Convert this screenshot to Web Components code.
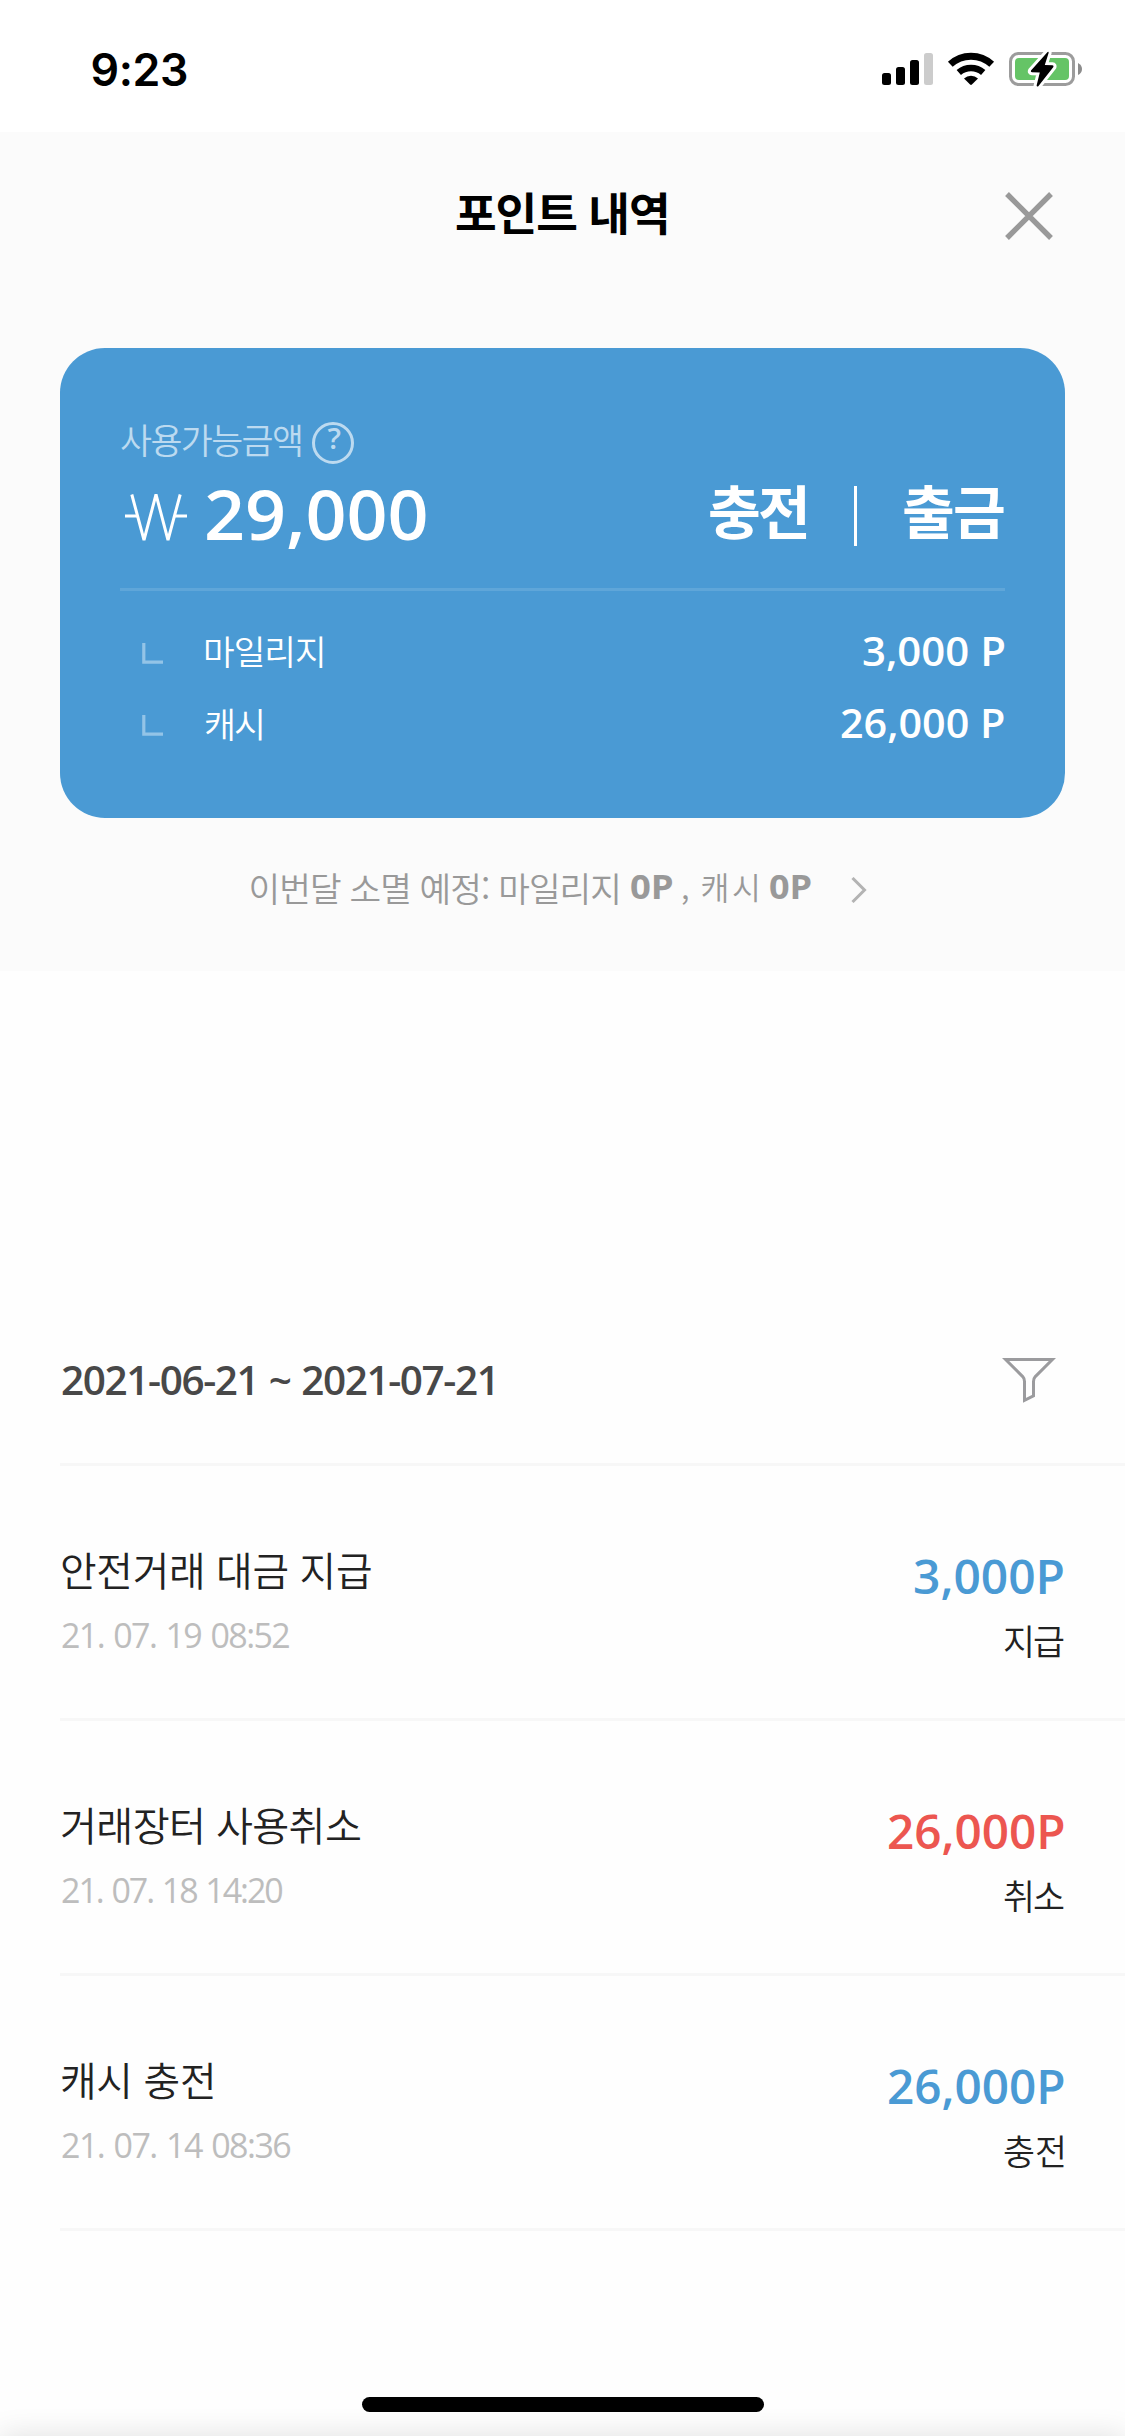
<!DOCTYPE html>
<html lang="ko">
<head>
<meta charset="utf-8">
<title>포인트 내역</title>
<style>
  html, body { margin: 0; background: #fefefe; }
  body { font-family: "Noto Sans CJK KR", sans-serif; }
</style>
</head>
<body>
<point-screen></point-screen>

<script>
const define = (name, html) => customElements.define(name, class extends HTMLElement {
  constructor() {
    super();
    this.attachShadow({ mode: 'open' }).innerHTML = html;
  }
});

/* Text trimmed to its ink box: w and h give the box, size is optional,
   tracking (or a slight widening for figures) makes the text fill the width. */
const ctx = document.createElement('canvas').getContext('2d');
const KR = '"Noto Sans CJK KR", sans-serif';
const FAMILIES = { kr: KR, num: '"Open Sans", "Noto Sans", sans-serif', ui: 'Inter, sans-serif' };
customElements.define('ink-text', class extends HTMLElement {
  constructor() {
    super();
    this.attachShadow({ mode: 'open' }).innerHTML =
      `<style>
        :host { display: flow-root; flex: none; }
        span { display: block; white-space: pre; width: max-content; transform-origin: 0 0; }
      </style><span></span>`;
  }
  connectedCallback() {
    const text = this.getAttribute('text');
    const w = +this.getAttribute('w'), h = +this.getAttribute('h');
    const ws = +this.getAttribute('ws') || 0;
    const weight = this.getAttribute('weight') || 400;
    const face = this.getAttribute('face') || 'kr';
    const family = FAMILIES[face];
    const measure = s => { ctx.font = `${weight} ${s}px ${family}`; return ctx.measureText(text); };
    let size = +this.getAttribute('size');
    if (!size) {
      const m = measure(100);
      size = Math.round(h / (m.actualBoundingBoxAscent + m.actualBoundingBoxDescent) * 1000) / 10;
    }
    const m = measure(size);
    const lh = Math.ceil(size * 1.5);
    const asc = Math.round(m.fontBoundingBoxAscent), desc = Math.round(m.fontBoundingBoxDescent);
    const base = (lh - asc - desc) / 2 + asc;
    this.style.width = w + 'px';
    this.style.height = h + 'px';
    const span = this.shadowRoot.querySelector('span');
    span.textContent = text;
    const n = text.length - 1;
    let ink = m.actualBoundingBoxLeft + m.actualBoundingBoxRight;
    span.style.cssText = `font:${weight} ${size}px/${lh}px ${family};letter-spacing:0.01px;word-spacing:${ws}px`;
    const laid = span.getBoundingClientRect().width;
    if (laid) ink += laid - m.width;
    const scale = face === 'num' && n && w > ink ? Math.min(w / ink, 1.14) : 1;
    const gap = n ? (w / scale - ink) / n : 0;
    span.style.letterSpacing = gap.toFixed(3) + 'px';
    if (scale > 1) span.style.transform = `scaleX(${scale.toFixed(4)})`;
    span.style.margin = `${Math.round(m.actualBoundingBoxAscent - base)}px 0 0 ${(m.actualBoundingBoxLeft * scale).toFixed(2)}px`;
  }
});

define('status-bar', `
<style>
  :host { display: flex; height: 132px; box-sizing: border-box; padding: 51px 43px 0 92.5px; justify-content: space-between; background: #fff; }
  ink-text { margin-top: 1px; }
  svg { display: block; }
</style>
<ink-text text="9:23" face="ui" weight="600" w="94.5" h="34"></ink-text>
<svg width="201" height="37" viewBox="881 51 201 37" aria-hidden="true">
  <rect x="882" y="73" width="9" height="12" rx="2.5"/>
  <rect x="896" y="67" width="9" height="18" rx="2.5"/>
  <rect x="910" y="60" width="9" height="25" rx="2.5"/>
  <rect x="924" y="53" width="9" height="32" rx="2.5" fill="#ccc"/>
  <g fill="none" stroke="#000">
    <path d="M950.3 64.3 A30.5 30.5 0 0 1 991.7 64.3" stroke-width="7"/>
    <path d="M958.8 72.6 A18.6 18.6 0 0 1 983.2 72.6" stroke-width="6.6"/>
  </g>
  <path d="M964 78.4 A10.6 10.6 0 0 1 978 78.4 L971.9 84.5 Q971 85.4 970.1 84.5 Z"/>
  <rect x="1010.5" y="53.5" width="63" height="31" rx="8" fill="none" stroke="#9c9c9c" stroke-width="3"/>
  <rect x="1015" y="58" width="54" height="22" rx="4" fill="#65c466"/>
  <path d="M1078 63 Q1082 65 1082 69 Q1082 73 1078 75 Z" fill="#8c8c8c"/>
  <path d="M1047.6 52 L1031 70.6 Q1030.3 72.2 1032 72.3 L1039.8 72.5 L1036.6 85.6 Q1036.9 87.2 1038.3 86.2 L1053.4 67 Q1054 65.3 1052.4 65.2 L1044.8 64.9 L1048.6 53 Q1048.8 51 1047.6 52 Z" stroke="#fff" stroke-width="6" paint-order="stroke"/>
</svg>`);

define('page-header', `
<style>
  :host { display: grid; grid-template-columns: 1fr auto 1fr; height: 216px; box-sizing: border-box; padding: 60px 72px 0 69px; align-items: start; }
  svg { justify-self: end; }
</style>
<i></i>
<ink-text text="포인트 내역" weight="700" w="210" h="43"></ink-text>
<svg width="48" height="48" viewBox="0 0 48 48" aria-label="닫기"><path d="M2 2 L46 46 M46 2 L2 46" stroke="#999" stroke-width="5.4"/></svg>`);

define('point-row', `
<style>
  :host { display: flex; height: 36px; padding: 0 1px 0 22px; align-items: flex-start; color: #fff; }
  svg { margin: 7px 43px 0 0; flex: none; }
  .amount { display: block; margin: 1px 0 0 auto; }
</style>
<svg width="21" height="21" viewBox="0 0 21 21"><path d="M1.8 0 V19.2 H21" fill="none" stroke="#93c4e7" stroke-width="3.2"/></svg>
<slot></slot><slot class="amount" name="amount"></slot>`);

define('balance-card', `
<style>
  :host { display: flex; flex-direction: column; box-sizing: border-box; margin: 0 60px; height: 470px; padding: 74px 60px 0; border-radius: 45px; background: #4a9ad4; color: #fff; }
  .label { display: flex; height: 63px; padding-left: 1px; gap: 11px; color: #bcdaf0; align-items: flex-start; }
  .label > ink-text { margin-top: 1.5px; }
  .help { display: flex; justify-content: center; box-sizing: border-box; width: 42px; height: 42px; border: 3px solid currentColor; border-radius: 50%; padding: 3px 0 0 1px; }
  .main { display: flex; height: 103px; align-items: flex-start; padding-right: 1px; }
  .won { margin: 8px 20px 0 5px; }
  .sum { margin-top: 5px; }
  .actions { display: flex; margin-left: auto; align-items: flex-start; }
  .bar { width: 3px; height: 60px; margin: 1px 47px 0; background: #fff; }
  hr { width: 100%; height: 3px; margin: 0; border: 0; background: #5fa6d9; }
  .rows { display: flex; flex-direction: column; gap: 36px; padding-top: 45px; }
</style>
<div class="label">
  <ink-text text="사용가능금액" weight="350" w="180" h="32"></ink-text>
  <div class="help"><ink-text text="?" face="num" weight="600" w="12" h="22"></ink-text></div>
</div>
<div class="main">
  <svg class="won" width="62" height="50" viewBox="0 0 62 50" aria-label="₩" fill="none" stroke="#fff" stroke-width="3"><path d="M6.8 1.5 L19 47 L31 1.5 L43 47 L55.2 1.5" stroke-linejoin="bevel"/><path d="M0 23 H12 M50 23 H62"/></svg>
  <ink-text class="sum" text="29,000" face="num" weight="640" size="69" w="219" h="60"></ink-text>
  <div class="actions">
    <ink-text text="충전" weight="700" w="97" h="54"></ink-text>
    <div class="bar"></div>
    <ink-text text="출금" weight="700" w="100" h="54"></ink-text>
  </div>
</div>
<hr>
<div class="rows">
  <point-row>
    <ink-text text="마일리지" weight="350" w="117" h="32"></ink-text>
    <ink-text slot="amount" text="3,000 P" face="num" weight="650" size="40.5" w="141" h="35"></ink-text>
  </point-row>
  <point-row>
    <ink-text text="캐시" weight="350" w="56" h="32"></ink-text>
    <ink-text slot="amount" text="26,000 P" face="num" weight="650" size="40.5" w="162.5" h="35"></ink-text>
  </point-row>
</div>`);

define('expiry-notice', `
<style>
  :host { display: flex; height: 98px; padding: 55px 0 0 250.5px; align-items: flex-start; color: #999; }
  .n { margin: 2px 8.5px 0 13px; }
  .n2 { margin: 2px 39px 0 13px; }
  svg { margin-top: 4px; }
</style>
<ink-text text="이번달 소멸 예정: 마일리지" weight="350" w="368" h="32"></ink-text>
<ink-text class="n" text="0P" face="num" weight="680" size="34.5" w="42" h="26"></ink-text>
<ink-text text=", 캐시" weight="350" ws="-3" w="75" h="32"></ink-text>
<ink-text class="n2" text="0P" face="num" weight="680" size="34.5" w="41.5" h="26"></ink-text>
<svg width="16" height="26" viewBox="0 0 16 26"><path d="M1.5 1 L13.5 13 L1.5 25" fill="none" stroke="#b3b3b3" stroke-width="3"/></svg>`);

define('period-filter', `
<style>
  :host { display: flex; justify-content: space-between; align-items: flex-start; box-sizing: border-box; height: 108px; margin-left: 60px; padding: 0 69px 0 2px; border-bottom: 3px solid #f7f7f7; color: #484848; }
  ink-text { margin-top: 8px; }
</style>
<ink-text text="2021-06-21 ~ 2021-07-21" face="num" weight="650" size="40.5" ws="1.5" w="431" h="30"></ink-text>
<svg width="54" height="45" viewBox="0 0 54 45" aria-label="필터"><path d="M3.6 1.5 H50.4 L33.3 18.6 Q31.5 20.6 31.5 23.5 V37.8 L22.5 42.3 V23.5 Q22.5 20.6 20.7 18.6 Z" fill="none" stroke="#9b9b9e" stroke-width="3"/></svg>`);

define('history-item', `
<style>
  :host { display: flex; justify-content: space-between; box-sizing: border-box; height: 255px; margin-left: 60px; padding: 86px 61px 0 2px; border-bottom: 3px solid #f7f7f7; color: #222; }
  div { display: flex; flex-direction: column; align-items: flex-start; gap: 34px; }
  .side { align-items: flex-end; padding-top: 7px; gap: 25px; }
</style>
<div><slot name="title"></slot><slot name="date"></slot></div>
<div class="side"><slot name="amount"></slot><slot name="kind"></slot></div>`);

define('home-indicator', `
<style>
  :host { display: flex; flex-direction: column; align-items: center; height: 39px; margin-top: auto; overflow: hidden; padding-top: 20px; }
  b { flex: none; width: 402px; height: 15px; border-radius: 7.5px; background: #000; z-index: 1; }
  i { width: 100%; height: 60px; flex: none; margin: 24px 0 -60px; box-shadow: 0 0 30px rgba(0,0,0,.125); }
</style>
<b></b><i></i>`);

const item = (title, tw, date, dw, amount, aw, color, kind) => `
<history-item>
  <ink-text slot="title" text="${title}" weight="350" w="${tw}" h="37"></ink-text>
  <ink-text slot="date" style="color:#bdbdbd" text="${date}" face="num" weight="400" size="34" ws="2" w="${dw}" h="26"></ink-text>
  <ink-text slot="amount" style="color:${color}" text="${amount}" face="num" weight="650" size="46.4" w="${aw}" h="41"></ink-text>
  <ink-text slot="kind" text="${kind}" weight="350" w="60" h="32"></ink-text>
</history-item>`;

define('point-screen', `
<style>
  :host { display: flex; flex-direction: column; width: 1125px; height: 2436px; overflow: hidden; background: #fefefe; }
  .top { height: 839px; background: #fbfbfb; }
  .list { padding-top: 387px; }
</style>
<status-bar></status-bar>
<div class="top">
  <page-header></page-header>
  <balance-card></balance-card>
  <expiry-notice></expiry-notice>
</div>
<div class="list">
  <period-filter></period-filter>
  ${item('안전거래 대금 지급', 309, '21. 07. 19 08:52', 227.5, '3,000P', 149.5, '#4a9ad4', '지급')}
  ${item('거래장터 사용취소', 298, '21. 07. 18 14:20', 220.5, '26,000P', 175, '#ec5650', '취소')}
  ${item('캐시 충전', 151, '21. 07. 14 08:36', 228.5, '26,000P', 175, '#4a9ad4', '충전')}
</div>
<home-indicator></home-indicator>`);
</script>
</body>
</html>
